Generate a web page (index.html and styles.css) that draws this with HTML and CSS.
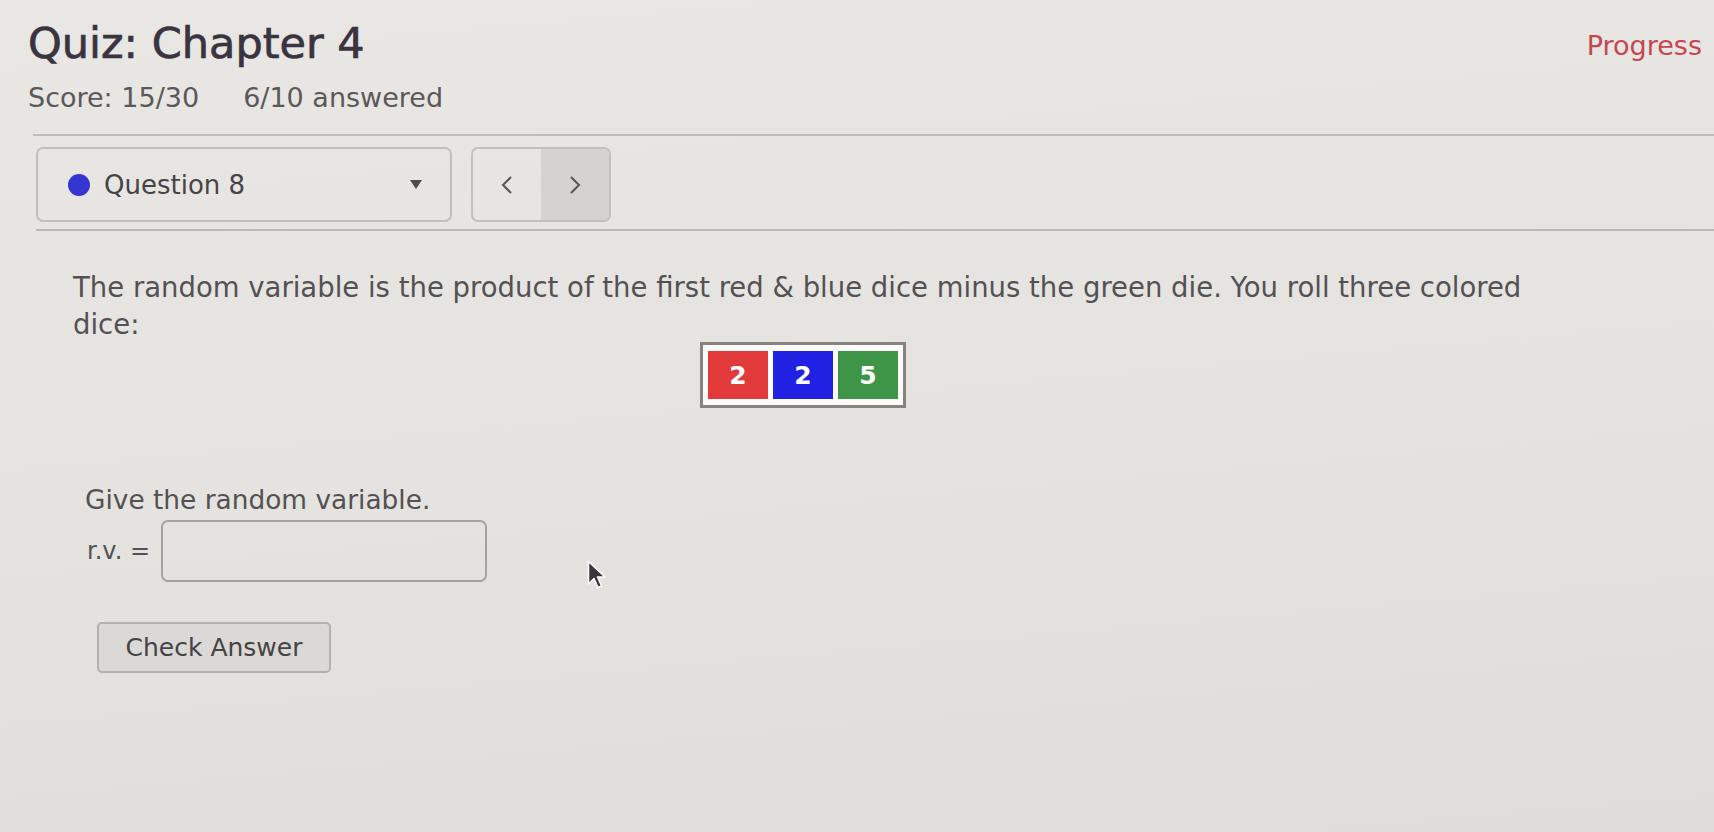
FILE: index.html
```html
<!DOCTYPE html>
<html lang="en">
<head>
<meta charset="UTF-8">
<meta name="viewport" content="width=device-width, initial-scale=1.0">
<title>Quiz: Chapter 4</title>
<link rel="stylesheet" href="styles.css">
</head>
<body>

<div class="quiz">
    <div class="quiz-head">
        <div>
            <h1>Quiz: Chapter 4</h1>
            <div class="score">
                <span>Score: 15/30</span>
                <span>6/10 answered</span>
            </div>
        </div>
        <a class="progress" href="#">Progress</a>
    </div>

    <hr class="rule">

    <div class="qnav">
        <div class="qselect">
            <span class="dot"></span>
            <span class="qname">Question 8</span>
            <svg class="caret" width="12" height="9" viewBox="0 0 12 9"><path d="M0 0 H12 L6 9 Z" fill="#4e4b4e"/></svg>
        </div>
        <div class="pager">
            <button class="prev" aria-label="Previous question">
                <svg width="12" height="20" viewBox="0 0 12 20"><polyline points="10,2 2,10 10,18" fill="none" stroke="#555" stroke-width="2"/></svg>
            </button>
            <button class="next" aria-label="Next question">
                <svg width="12" height="20" viewBox="0 0 12 20"><polyline points="2,2 10,10 2,18" fill="none" stroke="#555" stroke-width="2"/></svg>
            </button>
        </div>
    </div>

    <hr class="rule thick">

    <div class="question">
        <p class="prompt">The random variable is the product of the first red &amp; blue dice minus the green die. You roll three colored dice:</p>

        <div class="dice-row">
            <div class="dice">
                <div class="die red">2</div>
                <div class="die blue">2</div>
                <div class="die green">5</div>
            </div>
        </div>

        <p class="ask">Give the random variable.</p>
        <div class="answer">
            <label for="rv">r.v. =</label>
            <input type="text" id="rv">
        </div>

        <button class="check">Check Answer</button>
    </div>
</div>

<!-- mouse pointer -->
<svg class="pointer" width="20" height="30" viewBox="0 0 20 30">
    <path d="M1.5 1.5 L1.5 24 L7 18.5 L11 27.5 L14.5 26 L10.5 17 L18 17 Z" fill="#38353d" stroke="#fff" stroke-width="1.5" stroke-linejoin="round"/>
</svg>

</body>
</html>
```

FILE: styles.css
```css
body {
    margin: 0;
    min-height: 100vh;
    font-family: "DejaVu Sans", "Open Sans", sans-serif;
    color: #545154;
    background: linear-gradient(175deg, #e9e7e4 0%, #e5e3df 55%, #dfddd9 100%);
}

.quiz {
    padding: 18px 0 0 28px;
}

.quiz-head {
    display: flex;
    justify-content: space-between;
    align-items: flex-start;
    padding-right: 12px;
}

h1 {
    margin: 0;
    font-size: 43px;
    font-weight: normal;
    line-height: 50px;
    color: #3a3340;
    -webkit-text-stroke: 0.7px #3a3340;
}

.score {
    display: flex;
    gap: 44px;
    margin-top: 14px;
    font-size: 27px;
    line-height: 32px;
    color: #5b585a;
}

.progress {
    margin-top: 12px;
    font-size: 27px;
    line-height: 32px;
    color: #c4464f;
    text-decoration: none;
}

.rule {
    border: 0;
    border-top: 2px solid #bfbdba;
    margin: 20px 0 0 5px;
}

.rule.thick {
    margin: 7px 0 0 8px;
    border-top-color: #bbb9b6;
}

.qnav {
    display: flex;
    gap: 19px;
    margin: 11px 0 0 8px;
}

.qselect {
    box-sizing: border-box;
    width: 416px;
    height: 75px;
    display: flex;
    align-items: center;
    padding: 0 28px 0 30px;
    border: 2px solid #c2c0bd;
    border-radius: 7px;
}

.dot {
    width: 22px;
    height: 22px;
    border-radius: 50%;
    background-color: #3535d2;
    margin-right: 14px;
}

.qname {
    font-size: 26px;
    color: #474447;
}

.caret {
    margin-left: auto;
}

.pager {
    box-sizing: border-box;
    width: 140px;
    height: 75px;
    display: flex;
    border: 2px solid #c2c0bd;
    border-radius: 7px;
    overflow: hidden;
}

.pager button {
    flex: 1;
    border: none;
    padding: 0;
    background: transparent;
    display: flex;
    align-items: center;
    justify-content: center;
    cursor: pointer;
}

.pager .next {
    background-color: #d5d3d0;
}

.question {
    width: 1460px;
    padding: 38px 0 0 45px;
}

.prompt {
    margin: 0;
    font-size: 27.5px;
    line-height: 37px;
}

.dice-row {
    display: flex;
    justify-content: center;
    margin-top: -1px;
}

.dice {
    display: flex;
    gap: 5px;
    padding: 6px 5px;
    border: 3px solid #86827f;
    background-color: #fbfbfa;
}

.die {
    width: 60px;
    height: 48px;
    display: flex;
    align-items: center;
    justify-content: center;
    color: white;
    font-size: 25px;
    font-weight: bold;
}

.die.red { background-color: #e23a3b; }
.die.blue { background-color: #2121e4; }
.die.green { background-color: #3e9548; }

.ask {
    margin: 73px 0 0 12px;
    font-size: 26.4px;
    line-height: 37px;
}

.answer {
    display: flex;
    align-items: center;
    gap: 11px;
    margin: 2px 0 0 14px;
}

.answer label {
    font-size: 24px;
}

.answer input {
    box-sizing: border-box;
    width: 326px;
    height: 62px;
    border: 2px solid #a5a3a0;
    border-radius: 7px;
    background: transparent;
}

.check {
    display: block;
    box-sizing: border-box;
    width: 234px;
    height: 51px;
    margin: 40px 0 0 24px;
    font-family: inherit;
    font-size: 25px;
    color: #454345;
    background-color: #dbd9d6;
    border: 2px solid #b3b1ae;
    border-radius: 5px;
    cursor: pointer;
}

.pointer {
    position: absolute;
    left: 587px;
    top: 560px;
}
```
